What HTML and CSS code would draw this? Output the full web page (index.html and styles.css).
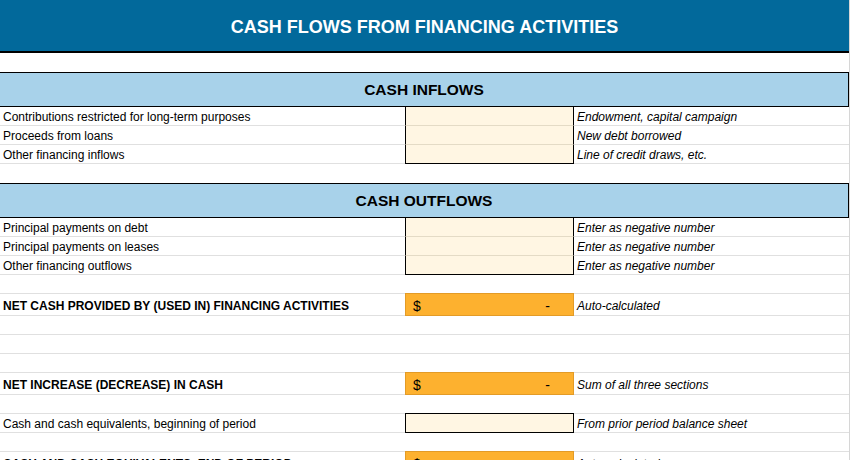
FILE: index.html
```html
<!DOCTYPE html>
<html>
<head>
<meta charset="utf-8">
<link rel="stylesheet" href="styles.css">
</head>
<body>
<div class="sheet">
  <div class="title">CASH FLOWS FROM FINANCING ACTIVITIES</div>
  <div class="spacer"></div>

  <div class="section">CASH INFLOWS</div>
  <div class="row">
    <div class="label">Contributions restricted for long-term purposes</div>
    <div class="input"></div>
    <div class="note">Endowment, capital campaign</div>
  </div>
  <div class="row">
    <div class="label">Proceeds from loans</div>
    <div class="input"></div>
    <div class="note">New debt borrowed</div>
  </div>
  <div class="row">
    <div class="label">Other financing inflows</div>
    <div class="input last"></div>
    <div class="note">Line of credit draws, etc.</div>
  </div>
  <div class="spacer"></div>

  <div class="section">CASH OUTFLOWS</div>
  <div class="row">
    <div class="label">Principal payments on debt</div>
    <div class="input"></div>
    <div class="note">Enter as negative number</div>
  </div>
  <div class="row">
    <div class="label">Principal payments on leases</div>
    <div class="input"></div>
    <div class="note">Enter as negative number</div>
  </div>
  <div class="row">
    <div class="label">Other financing outflows</div>
    <div class="input last"></div>
    <div class="note">Enter as negative number</div>
  </div>
  <div class="row blank"></div>

  <div class="row total">
    <div class="label bold">NET CASH PROVIDED BY (USED IN) FINANCING ACTIVITIES</div>
    <div class="calc"><span>$</span><span>-</span></div>
    <div class="note">Auto-calculated</div>
  </div>
  <div class="row blank"></div>
  <div class="row blank"></div>
  <div class="row blank"></div>

  <div class="row total">
    <div class="label bold">NET INCREASE (DECREASE) IN CASH</div>
    <div class="calc"><span>$</span><span>-</span></div>
    <div class="note">Sum of all three sections</div>
  </div>
  <div class="row blank"></div>
  <div class="row">
    <div class="label">Cash and cash equivalents, beginning of period</div>
    <div class="input single"></div>
    <div class="note">From prior period balance sheet</div>
  </div>
  <div class="row blank"></div>
  <div class="row total">
    <div class="label bold">CASH AND CASH EQUIVALENTS, END OF PERIOD</div>
    <div class="calc"><span>$</span><span>-</span></div>
    <div class="note">Auto-calculated</div>
  </div>
</div>
</body>
</html>
```

FILE: styles.css
```css
html, body {
  margin: 0;
  padding: 0;
  background: #ffffff;
  overflow: hidden;
}

body {
  font-family: "Liberation Sans", Arial, sans-serif;
  color: #000;
  width: 850px;
  height: 460px;
}

.sheet {
  width: 849px;
  border-right: 1px solid #d6d6d6;
  min-height: 460px;
}

.title {
  box-sizing: border-box;
  height: 53px;
  background: #02699b;
  border-bottom: 2px solid #000;
  color: #fff;
  font-weight: bold;
  font-size: 18px;
  display: flex;
  align-items: center;
  justify-content: center;
  padding-top: 3px;
}

.spacer {
  height: 19px;
}

.section {
  box-sizing: border-box;
  height: 35px;
  background: #a8d2ea;
  border: 1px solid #000;
  border-left: none;
  width: 849px;
  font-weight: bold;
  font-size: 15.5px;
  display: flex;
  align-items: center;
  justify-content: center;
  padding-top: 1px;
}

.row {
  display: grid;
  grid-template-columns: 405px 169px 275px;
  height: 19px;
}

.row.blank {
  box-sizing: border-box;
  border-bottom: 1px solid #e0e0e0;
}

.row.total {
  height: 22px;
}

.label, .note {
  box-sizing: border-box;
  border-bottom: 1px solid #e0e0e0;
  font-size: 12px;
  padding-left: 3px;
  padding-top: 1px;
  display: flex;
  align-items: center;
  white-space: nowrap;
  overflow: hidden;
}

.note {
  font-style: italic;
  padding-left: 3px;
}

.bold {
  font-weight: bold;
  padding-top: 2px;
}

.total .note {
  padding-top: 2px;
}

.input {
  box-sizing: border-box;
  background: #fff6e3;
  border-left: 1px solid #000;
  border-right: 1px solid #000;
  border-bottom: 1px solid #e4dbc6;
}

.input.last {
  border-bottom: 1px solid #000;
}

.input.single {
  border: 1px solid #000;
  margin-top: -1px;
  height: 20px;
}

.calc {
  box-sizing: border-box;
  background: #fdb12f;
  border: 1px solid #e39b27;
  margin-top: -1px;
  height: 23px;
  display: flex;
  justify-content: space-between;
  align-items: center;
  padding: 2px 23px 0 7px;
  font-size: 14px;
}
```
